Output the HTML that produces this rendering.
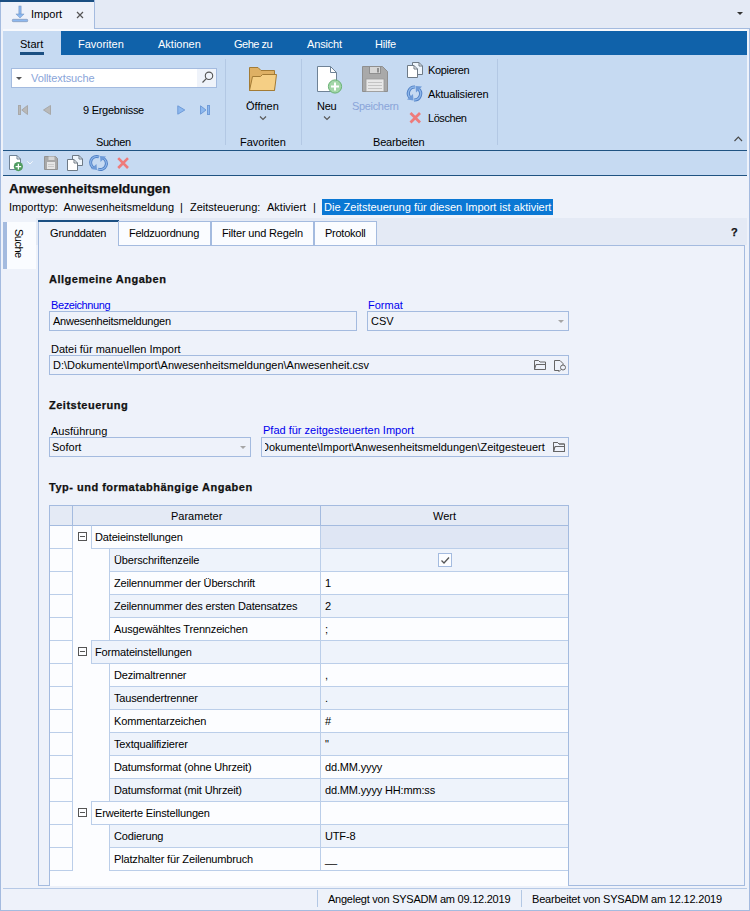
<!DOCTYPE html>
<html><head><meta charset="utf-8">
<style>
*{margin:0;padding:0;box-sizing:border-box}
html,body{width:750px;height:911px;overflow:hidden;background:#eef2fa}
body{position:relative;font-family:"Liberation Sans",sans-serif;font-size:11px;color:#1e1e1e}
.a{position:absolute}
.t{position:absolute;white-space:pre;line-height:11px;font-size:11px}
.b{font-weight:bold;letter-spacing:0.5px;-webkit-text-stroke:0.25px currentColor}
.box{position:absolute;border:1px solid #a4bbdf}
.hl{position:absolute;background:#a4bbdf}
svg{position:absolute;overflow:visible}
</style></head><body>

<!-- frame -->
<div class="a" style="left:0;top:0;width:750px;height:911px;border:1px solid #a4bbdf;border-top:none"></div>

<!-- doc tab strip -->
<div class="a" style="left:94px;top:0;width:656px;height:29px;background:#e4eaf5;border-left:1px solid #a4bbdf;border-bottom:1px solid #a4bbdf"></div>
<div class="a" style="left:0;top:0;width:94px;height:2px;background:#1b4f82"></div>
<svg style="left:0;top:0" width="40" height="30">
 <rect x="18.9" y="6" width="2.2" height="8.5" fill="#8cb8f0" stroke="#6f90bd" stroke-width="0.5"/>
 <path d="M15.9 14 L24.1 14 L20 18 Z" fill="#8cb8f0" stroke="#6f90bd" stroke-width="0.5"/>
 <rect x="12.3" y="19.3" width="15.4" height="2.4" rx="0.8" fill="#8cb8f0" stroke="#7a8fae" stroke-width="0.6"/>
</svg>
<div class="t" style="left:31px;top:9px;color:#000">Import</div>
<svg style="left:0;top:0" width="100" height="30">
 <path d="M77 12 L83 18 M83 12 L77 18" stroke="#555" stroke-width="1.2"/>
</svg>
<svg style="left:0;top:0" width="750" height="30">
 <path d="M737 12 L743 12 L740 15 Z" fill="#333"/>
</svg>

<!-- ribbon -->
<div class="a" style="left:3px;top:29px;width:744px;height:2px;background:#f7f9fd"></div>
<div class="a" style="left:61px;top:31px;width:686px;height:24px;background:#1062aa"></div>
<div class="a" style="left:3px;top:31px;width:58px;height:119px;background:#c6daf2"></div>
<div class="a" style="left:61px;top:55px;width:686px;height:95px;background:#c6daf2"></div>
<div class="t" style="left:20px;top:39px;color:#000">Start</div>
<div class="a" style="left:20px;top:52px;width:24px;height:3px;background:#1b4f82"></div>
<div class="t" style="left:78px;top:39px;color:#fff">Favoriten</div>
<div class="t" style="left:158px;top:39px;color:#fff">Aktionen</div>
<div class="t" style="left:234px;top:39px;color:#fff;letter-spacing:-0.5px">Gehe zu</div>
<div class="t" style="left:307px;top:39px;color:#fff;letter-spacing:-0.16px">Ansicht</div>
<div class="t" style="left:375px;top:39px;color:#fff;letter-spacing:-0.2px">Hilfe</div>

<!-- search box -->
<div class="a" style="left:11px;top:68px;width:206px;height:20px;background:#fff;border:1px solid #a4bbdf"></div>
<div class="a" style="left:197px;top:69px;width:19px;height:18px;background:#eff3fa"></div>
<svg style="left:0;top:0" width="230" height="100">
 <path d="M16 77 L22 77 L19 80 Z" fill="#555"/>
 <circle cx="209" cy="75.8" r="3.7" fill="none" stroke="#555" stroke-width="1.1"/>
 <path d="M206.3 78.6 L202.5 82.5" stroke="#555" stroke-width="1.2"/>
</svg>
<div class="t" style="left:31px;top:73px;color:#8aa5d9;letter-spacing:-0.1px">Volltextsuche</div>

<!-- nav -->
<svg style="left:0;top:0" width="230" height="130">
 <rect x="18.5" y="105.5" width="2" height="9" fill="#b9b9b9" stroke="#a8a8a8" stroke-width="1"/>
 <path d="M27.5 105.5 L27.5 114.5 L21.8 110 Z" fill="#b9b9b9" stroke="#a8a8a8" stroke-width="1" stroke-linejoin="round"/>
 <path d="M50.5 105.5 L50.5 114.5 L43.5 110 Z" fill="#b9b9b9" stroke="#a8a8a8" stroke-width="1" stroke-linejoin="round"/>
 <path d="M177.8 105.8 L177.8 114.2 L184.8 110 Z" fill="#8db8ef" stroke="#6f9bd8" stroke-width="1" stroke-linejoin="round"/>
 <path d="M200.5 105.8 L200.5 114.2 L206 110 Z" fill="#8db8ef" stroke="#6f9bd8" stroke-width="1" stroke-linejoin="round"/>
 <rect x="207.5" y="105.5" width="2" height="9" fill="#8db8ef" stroke="#6f9bd8" stroke-width="1"/>
</svg>
<div class="t" style="left:83px;top:105px;color:#000;letter-spacing:-0.27px">9 Ergebnisse</div>
<div class="t" style="left:96px;top:137px;color:#000;letter-spacing:-0.45px">Suchen</div>

<!-- separators -->
<div class="a" style="left:225px;top:59px;width:1px;height:86px;background:#b3c8e4"></div>
<div class="a" style="left:301px;top:59px;width:1px;height:86px;background:#b3c8e4"></div>
<div class="a" style="left:497px;top:59px;width:1px;height:86px;background:#b3c8e4"></div>

<!-- Favoriten group -->
<svg style="left:0;top:0" width="300" height="130">
 <path d="M249.5 90.5 L249.5 67.5 L258 67.5 L261 70.5 L274.5 70.5 L274.5 90.5 Z" fill="#deb064" stroke="#a37b35" stroke-width="1"/>
 <path d="M249.5 90.5 L252.5 76.5 L260.5 76.5 L262.5 74.5 L276.5 74.5 L274.5 90.5 Z" fill="#f5cf85" stroke="#a37b35" stroke-width="1" stroke-linejoin="round"/>
 <path d="M260 116.5 L263 119.5 L266 116.5" fill="none" stroke="#555" stroke-width="1.1"/>
</svg>
<div class="t" style="left:246px;top:101px;color:#000">Öffnen</div>
<div class="t" style="left:240px;top:137px;color:#000">Favoriten</div>

<!-- Bearbeiten group -->
<svg style="left:0;top:0" width="500" height="130">
 <!-- new doc -->
 <path d="M317.5 66.5 L330.5 66.5 L336.5 72.5 L336.5 91.5 L317.5 91.5 Z" fill="#fff" stroke="#6f8296" stroke-width="1"/>
 <path d="M330.5 66.5 L330.5 72.5 L336.5 72.5" fill="none" stroke="#6f8296" stroke-width="1"/>
 <circle cx="335" cy="86.5" r="6.6" fill="#a3d6a8" stroke="#68b274" stroke-width="1"/>
 <path d="M335 82.5 L335 90.5 M331 86.5 L339 86.5" stroke="#fff" stroke-width="2"/>
 <path d="M324 116.5 L327 119.5 L330 116.5" fill="none" stroke="#555" stroke-width="1.1"/>
 <!-- save gray -->
 <path d="M362.5 66.5 L382.5 66.5 L387.5 71.5 L387.5 91.5 L362.5 91.5 Z" fill="#a9a9a9" stroke="#8f8f8f" stroke-width="1"/>
 <rect x="369.5" y="66.5" width="11" height="7" fill="#d6d6d6" stroke="#8f8f8f" stroke-width="1"/>
 <rect x="377" y="68" width="2" height="4.5" fill="#8f8f8f"/>
 <rect x="366" y="79" width="18" height="12.5" fill="#e8e8e8" stroke="#9a9a9a" stroke-width="0.8"/>
 <path d="M368 82.5 H382 M368 85.5 H382 M368 88.5 H382" stroke="#c4c4c4" stroke-width="1"/>
 <!-- copy -->
 <path d="M412.5 62.5 L419 62.5 L422.5 66 L422.5 74.5 L412.5 74.5 Z" fill="#eef5fc" stroke="#6e7a86" stroke-width="1"/>
 <path d="M419 62.5 L419 66 L422.5 66" fill="none" stroke="#6e7a86" stroke-width="1"/>
 <path d="M407.5 65.5 L414 65.5 L417.5 69 L417.5 77.5 L407.5 77.5 Z" fill="#fff" stroke="#6e7a86" stroke-width="1"/>
 <path d="M414 65.5 L414 69 L417.5 69" fill="none" stroke="#6e7a86" stroke-width="1"/>
 <!-- refresh -->
 <path d="M415 87 A6.3 6.3 0 0 0 410.5 98" fill="none" stroke="#4f7fc4" stroke-width="3.2"/>
 <path d="M414 100 A6.3 6.3 0 0 0 418.5 89" fill="none" stroke="#4f7fc4" stroke-width="3.2"/>
 <path d="M415 87 A6.3 6.3 0 0 0 410.5 98" fill="none" stroke="#8db6ea" stroke-width="1.4"/>
 <path d="M414 100 A6.3 6.3 0 0 0 418.5 89" fill="none" stroke="#8db6ea" stroke-width="1.4"/>
 <path d="M407 99.5 L413.5 100.5 L413 94 Z" fill="#6f9bd8"/>
 <path d="M422 86.5 L415.5 86 L416 92.5 Z" fill="#6f9bd8"/>
 <!-- delete -->
 <path d="M410.5 113 L420 122.5 M420 113 L410.5 122.5" stroke="#ee7b7b" stroke-width="2.8"/>
</svg>
<div class="t" style="left:317px;top:101px;color:#000;letter-spacing:-0.3px">Neu</div>
<div class="t" style="left:352px;top:101px;color:#8aa5d9;letter-spacing:-0.33px">Speichern</div>
<div class="t" style="left:428px;top:65px;color:#000;letter-spacing:-0.33px">Kopieren</div>
<div class="t" style="left:428px;top:89px;color:#000;letter-spacing:-0.2px">Aktualisieren</div>
<div class="t" style="left:428px;top:113px;color:#000;letter-spacing:-0.44px">Löschen</div>
<div class="t" style="left:373px;top:137px;color:#000;letter-spacing:-0.17px">Bearbeiten</div>
<svg style="left:0;top:0" width="750" height="150">
 <path d="M734.5 141 L738.3 137.2 L742 141" fill="none" stroke="#4a4a4a" stroke-width="1.2"/>
</svg>

<!-- toolbar -->
<div class="a" style="left:3px;top:150px;width:744px;height:1px;background:#1f5382"></div>
<div class="a" style="left:3px;top:151px;width:744px;height:24px;background:#c6daf2"></div>
<div class="a" style="left:3px;top:175px;width:744px;height:1px;background:#1f5382"></div>
<svg style="left:0;top:0" width="150" height="180">
 <path d="M9.5 155.5 L17 155.5 L20.5 159 L20.5 169.5 L9.5 169.5 Z" fill="#fff" stroke="#6f8296" stroke-width="1"/>
 <path d="M17 155.5 L17 159 L20.5 159" fill="none" stroke="#6f8296" stroke-width="1"/>
 <circle cx="18.4" cy="166.6" r="4.6" fill="#4f9c60"/>
 <path d="M18.4 163.8 L18.4 169.4 M15.6 166.6 L21.2 166.6" stroke="#fff" stroke-width="1.3"/>
 <path d="M27.3 161.3 L30 164 L32.7 161.3" fill="none" stroke="#f4f8fd" stroke-width="1"/>
 <path d="M44.5 156.5 L55.5 156.5 L57.5 158.5 L57.5 169.5 L44.5 169.5 Z" fill="#a9a9a9" stroke="#939393" stroke-width="1"/>
 <rect x="48.5" y="156.5" width="6" height="3.5" fill="#d6d6d6"/>
 <rect x="47" y="162" width="8" height="7" fill="#e6e6e6"/>
 <path d="M48 164.5 H54 M48 166.5 H54" stroke="#c4c4c4" stroke-width="0.8"/>
 <path d="M72.5 155.5 L79 155.5 L82.5 159 L82.5 165.5 L72.5 165.5 Z" fill="#eef5fc" stroke="#6e7a86" stroke-width="1"/>
 <path d="M79 155.5 L79 159 L82.5 159" fill="none" stroke="#6e7a86" stroke-width="1"/>
 <path d="M67.5 159.5 L74 159.5 L77.5 163 L77.5 170.5 L67.5 170.5 Z" fill="#fff" stroke="#6e7a86" stroke-width="1"/>
 <path d="M74 159.5 L74 163 L77.5 163" fill="none" stroke="#6e7a86" stroke-width="1"/>
 <path d="M99 157 A6 6 0 0 0 94.2 168" fill="none" stroke="#4f7fc4" stroke-width="3"/>
 <path d="M98 169 A6 6 0 0 0 102.8 158" fill="none" stroke="#4f7fc4" stroke-width="3"/>
 <path d="M99 157 A6 6 0 0 0 94.2 168" fill="none" stroke="#8db6ea" stroke-width="1.2"/>
 <path d="M98 169 A6 6 0 0 0 102.8 158" fill="none" stroke="#8db6ea" stroke-width="1.2"/>
 <path d="M91 169 L97 170 L96.5 164 Z" fill="#6f9bd8"/>
 <path d="M106 156.5 L100 156 L100.5 162 Z" fill="#6f9bd8"/>
 <path d="M118.2 158.2 L128 168 M128 158.2 L118.2 168" stroke="#ee7b7b" stroke-width="2.6"/>
</svg>

<!-- title -->
<div class="t b" style="left:9px;top:182px;font-size:13.4px;letter-spacing:0;line-height:13px;color:#111">Anwesenheitsmeldungen</div>
<div class="t" style="left:9px;top:202px;color:#000">Importtyp:  Anwesenheitsmeldung</div>
<div class="t" style="left:180px;top:202px;color:#000">|</div>
<div class="t" style="left:190px;top:202px;color:#000">Zeitsteuerung:</div>
<div class="t" style="left:267px;top:202px;color:#000">Aktiviert</div>
<div class="t" style="left:313px;top:202px;color:#000">|</div>
<div class="a" style="left:322px;top:199px;width:231px;height:16px;background:#0a78d4"></div>
<div class="t" style="left:324px;top:202px;color:#fff">Die Zeitsteuerung für diesen Import ist aktiviert</div>

<!-- side panel -->
<div class="a" style="left:3px;top:222px;width:33px;height:47px;background:#fafcff"></div>
<div class="a" style="left:3px;top:222px;width:4px;height:47px;background:#a4bbdf"></div>
<div class="t" style="left:24px;top:229px;transform:rotate(90deg);transform-origin:0 0;color:#000;letter-spacing:-0.5px">Suche</div>

<!-- tab header strip -->
<div class="a" style="left:36px;top:218px;width:711px;height:27px;background:#e4eaf5"></div>
<div class="a" style="left:38px;top:220px;width:81px;height:26px;background:#eef2fa;border-left:1px solid #a4bbdf"></div>
<div class="a" style="left:38px;top:220px;width:81px;height:2px;background:#1b4f82"></div>
<div class="a" style="left:118px;top:221px;width:93px;height:25px;background:#fafcff;border:1px solid #a4bbdf;border-bottom:none"></div>
<div class="a" style="left:211px;top:221px;width:103px;height:25px;background:#fafcff;border:1px solid #a4bbdf;border-bottom:none"></div>
<div class="a" style="left:314px;top:221px;width:63px;height:25px;background:#fafcff;border:1px solid #a4bbdf;border-bottom:none"></div>
<div class="t" style="left:50px;top:228px;color:#000;letter-spacing:-0.18px">Grunddaten</div>
<div class="t" style="left:129px;top:228px;color:#000;letter-spacing:-0.26px">Feldzuordnung</div>
<div class="t" style="left:222px;top:228px;color:#000;letter-spacing:-0.17px">Filter und Regeln</div>
<div class="t" style="left:325px;top:228px;color:#000;letter-spacing:-0.25px">Protokoll</div>
<div class="t b" style="left:731px;top:227px;color:#111">?</div>

<!-- tab page -->
<div class="a" style="left:38px;top:245px;width:707px;height:641px;border:1px solid #a4bbdf;border-top:none;background:#eef2fa"></div>
<div class="a" style="left:118px;top:245px;width:627px;height:1px;background:#a4bbdf"></div>

<!--FORM-->
<div class="t b" style="left:49px;top:274px;color:#111">Allgemeine Angaben</div>
<div class="t" style="left:51px;top:300px;color:#0000ee;letter-spacing:-0.4px">Bezeichnung</div>
<div class="box" style="left:49px;top:311px;width:308px;height:20px"></div>
<div class="t" style="left:53px;top:316px;color:#000;letter-spacing:-0.24px">Anwesenheitsmeldungen</div>
<div class="t" style="left:368px;top:300px;color:#0000ee">Format</div>
<div class="box" style="left:367px;top:311px;width:202px;height:20px"></div>
<div class="t" style="left:371px;top:316px;color:#000">CSV</div>
<svg style="left:0;top:0" width="600" height="480">
 <path d="M558 320 L564 320 L561 323 Z" fill="#a6a6a6"/>
 <path d="M240 446 L246 446 L243 449 Z" fill="#a6a6a6"/>
</svg>
<div class="t" style="left:51px;top:344px;color:#000">Datei für manuellen Import</div>
<div class="box" style="left:49px;top:355px;width:520px;height:20px"></div>
<div class="t" style="left:53px;top:360px;color:#000">D:\Dokumente\Import\Anwesenheitsmeldungen\Anwesenheit.csv</div>
<svg style="left:0;top:0" width="600" height="480">
 <path d="M534.5 369.5 L534.5 360.5 L538.5 360.5 L540 362 L545.5 362 L545.5 369.5 Z" fill="none" stroke="#666" stroke-width="1"/>
 <path d="M534.5 369.5 L536 364.5 L545.5 364.5" fill="none" stroke="#666" stroke-width="1"/>
 <path d="M559 370.5 L554.5 370.5 L554.5 360.5 L560 360.5 L563 363.5 L563 365" fill="none" stroke="#666" stroke-width="1"/>
 <circle cx="563" cy="367.5" r="2.5" fill="none" stroke="#666" stroke-width="1"/>
 <path d="M561 369.5 L558.5 372" stroke="#666" stroke-width="1"/>
 <path d="M553.5 451.5 L553.5 442.5 L557.5 442.5 L559 444 L564.5 444 L564.5 451.5 Z" fill="none" stroke="#666" stroke-width="1"/>
 <path d="M553.5 451.5 L555 446.5 L564.5 446.5" fill="none" stroke="#666" stroke-width="1"/>
</svg>
<div class="t b" style="left:49px;top:400px;color:#111">Zeitsteuerung</div>
<div class="t" style="left:51px;top:426px;color:#000">Ausführung</div>
<div class="box" style="left:49px;top:437px;width:202px;height:20px"></div>
<div class="t" style="left:52px;top:442px;color:#000">Sofort</div>
<div class="t" style="left:263px;top:425px;color:#0000ee">Pfad für zeitgesteuerten Import</div>
<div class="box" style="left:261px;top:437px;width:308px;height:20px"><div class="a" style="left:3px;top:0;width:284px;height:18px;overflow:hidden"><div class="t" style="left:-4px;top:4px;color:#000">Dokumente\Import\Anwesenheitsmeldungen\Zeitgesteuert</div></div></div>
<svg style="left:0;top:0" width="600" height="480">
 <path d="M553.5 451.5 L553.5 442.5 L557.5 442.5 L559 444 L564.5 444 L564.5 451.5 Z" fill="none" stroke="#666" stroke-width="1"/>
 <path d="M553.5 451.5 L555 446.5 L564.5 446.5" fill="none" stroke="#666" stroke-width="1"/>
</svg>
<div class="t b" style="left:49px;top:482px;color:#111">Typ- und formatabhängige Angaben</div>
<!--/FORM-->
<!--GRID-->
<div class="a" style="left:49px;top:505px;width:520px;height:381px;overflow:hidden;background:#fcfdff;border-left:1px solid #a4bbdf;border-right:1px solid #a4bbdf">
<div class="a" style="left:0;top:0;width:518px;height:21px;background:#e4eaf5;border-top:1px solid #a4bbdf;border-bottom:1px solid #a4bbdf"></div>
<div class="a" style="left:22px;top:0;width:1px;height:21px;background:#a4bbdf"></div>
<div class="a" style="left:270px;top:0;width:1px;height:21px;background:#a4bbdf"></div>
<div class="t" style="left:121px;top:6px;color:#000">Parameter</div>
<div class="t" style="left:383px;top:6px;color:#000">Wert</div>
<div class="a" style="left:0;top:21px;width:22px;height:345px;background:#fcfdff"></div>
<div class="a" style="left:22px;top:21px;width:1px;height:345px;background:#bbcee9"></div>
<div class="a" style="left:0;top:43px;width:22px;height:1px;background:#bbcee9"></div>
<div class="a" style="left:23px;top:21px;width:18px;height:22px;background:#fcfdff"></div>
<div class="a" style="left:41px;top:20px;width:229px;height:24px;background:#fcfdff;border-left:1px solid #bbcee9;border-top:1px solid #a4bbdf;border-bottom:1px solid #bbcee9"></div>
<div class="a" style="left:271px;top:21px;width:247px;height:22px;background:#dfe6f4"></div>
<div class="a" style="left:271px;top:43px;width:247px;height:1px;background:#bbcee9"></div>
<div class="a" style="left:28px;top:27px;width:9px;height:9px;border:1px solid #555;background:#fcfdff"></div>
<div class="a" style="left:30px;top:31px;width:5px;height:1px;background:#555"></div>
<div class="t" style="left:45px;top:27px;color:#000;letter-spacing:-0.16px">Dateieinstellungen</div>
<div class="a" style="left:270px;top:21px;width:1px;height:23px;background:#bbcee9"></div>
<div class="a" style="left:0;top:66px;width:22px;height:1px;background:#bbcee9"></div>
<div class="a" style="left:23px;top:44px;width:36px;height:22px;background:#fcfdff"></div>
<div class="a" style="left:59px;top:44px;width:459px;height:22px;background:#eef3fb;border-left:1px solid #bbcee9"></div>
<div class="a" style="left:59px;top:66px;width:459px;height:1px;background:#bbcee9"></div>
<div class="t" style="left:64px;top:50px;color:#000;letter-spacing:-0.16px">Überschriftenzeile</div>
<div class="a" style="left:388px;top:48px;width:14px;height:14px;border:1px solid #a4bbdf;background:#fcfdff"></div>
<svg style="left:388px;top:48px" width="14" height="14"><path d="M3.5 7.5 L6 10 L11 4.5" fill="none" stroke="#555" stroke-width="1.3"/></svg>
<div class="a" style="left:270px;top:44px;width:1px;height:23px;background:#bbcee9"></div>
<div class="a" style="left:0;top:89px;width:22px;height:1px;background:#bbcee9"></div>
<div class="a" style="left:23px;top:67px;width:36px;height:22px;background:#fcfdff"></div>
<div class="a" style="left:59px;top:67px;width:459px;height:22px;background:#fcfdff;border-left:1px solid #bbcee9"></div>
<div class="a" style="left:59px;top:89px;width:459px;height:1px;background:#bbcee9"></div>
<div class="t" style="left:64px;top:73px;color:#000;letter-spacing:-0.16px">Zeilennummer der Überschrift</div>
<div class="t" style="left:275px;top:73px;color:#000;letter-spacing:-0.16px">1</div>
<div class="a" style="left:270px;top:67px;width:1px;height:23px;background:#bbcee9"></div>
<div class="a" style="left:0;top:112px;width:22px;height:1px;background:#bbcee9"></div>
<div class="a" style="left:23px;top:90px;width:36px;height:22px;background:#fcfdff"></div>
<div class="a" style="left:59px;top:90px;width:459px;height:22px;background:#eef3fb;border-left:1px solid #bbcee9"></div>
<div class="a" style="left:59px;top:112px;width:459px;height:1px;background:#bbcee9"></div>
<div class="t" style="left:64px;top:96px;color:#000;letter-spacing:-0.16px">Zeilennummer des ersten Datensatzes</div>
<div class="t" style="left:275px;top:96px;color:#000;letter-spacing:-0.16px">2</div>
<div class="a" style="left:270px;top:90px;width:1px;height:23px;background:#bbcee9"></div>
<div class="a" style="left:0;top:135px;width:22px;height:1px;background:#bbcee9"></div>
<div class="a" style="left:23px;top:113px;width:36px;height:22px;background:#fcfdff"></div>
<div class="a" style="left:59px;top:113px;width:459px;height:22px;background:#fcfdff;border-left:1px solid #bbcee9"></div>
<div class="a" style="left:59px;top:135px;width:459px;height:1px;background:#bbcee9"></div>
<div class="t" style="left:64px;top:119px;color:#000;letter-spacing:-0.16px">Ausgewähltes Trennzeichen</div>
<div class="t" style="left:275px;top:119px;color:#000;letter-spacing:-0.16px">;</div>
<div class="a" style="left:270px;top:113px;width:1px;height:23px;background:#bbcee9"></div>
<div class="a" style="left:0;top:158px;width:22px;height:1px;background:#bbcee9"></div>
<div class="a" style="left:23px;top:136px;width:18px;height:22px;background:#fcfdff"></div>
<div class="a" style="left:41px;top:135px;width:229px;height:24px;background:#eef3fb;border-left:1px solid #bbcee9;border-top:1px solid #bbcee9;border-bottom:1px solid #bbcee9"></div>
<div class="a" style="left:271px;top:136px;width:247px;height:22px;background:#eef3fb"></div>
<div class="a" style="left:271px;top:158px;width:247px;height:1px;background:#bbcee9"></div>
<div class="a" style="left:28px;top:142px;width:9px;height:9px;border:1px solid #555;background:#fcfdff"></div>
<div class="a" style="left:30px;top:146px;width:5px;height:1px;background:#555"></div>
<div class="t" style="left:45px;top:142px;color:#000;letter-spacing:-0.16px">Formateinstellungen</div>
<div class="a" style="left:270px;top:136px;width:1px;height:23px;background:#bbcee9"></div>
<div class="a" style="left:0;top:181px;width:22px;height:1px;background:#bbcee9"></div>
<div class="a" style="left:23px;top:159px;width:36px;height:22px;background:#fcfdff"></div>
<div class="a" style="left:59px;top:159px;width:459px;height:22px;background:#fcfdff;border-left:1px solid #bbcee9"></div>
<div class="a" style="left:59px;top:181px;width:459px;height:1px;background:#bbcee9"></div>
<div class="t" style="left:64px;top:165px;color:#000;letter-spacing:-0.16px">Dezimaltrenner</div>
<div class="t" style="left:275px;top:165px;color:#000;letter-spacing:-0.16px">,</div>
<div class="a" style="left:270px;top:159px;width:1px;height:23px;background:#bbcee9"></div>
<div class="a" style="left:0;top:204px;width:22px;height:1px;background:#bbcee9"></div>
<div class="a" style="left:23px;top:182px;width:36px;height:22px;background:#fcfdff"></div>
<div class="a" style="left:59px;top:182px;width:459px;height:22px;background:#eef3fb;border-left:1px solid #bbcee9"></div>
<div class="a" style="left:59px;top:204px;width:459px;height:1px;background:#bbcee9"></div>
<div class="t" style="left:64px;top:188px;color:#000;letter-spacing:-0.16px">Tausendertrenner</div>
<div class="t" style="left:275px;top:188px;color:#000;letter-spacing:-0.16px">.</div>
<div class="a" style="left:270px;top:182px;width:1px;height:23px;background:#bbcee9"></div>
<div class="a" style="left:0;top:227px;width:22px;height:1px;background:#bbcee9"></div>
<div class="a" style="left:23px;top:205px;width:36px;height:22px;background:#fcfdff"></div>
<div class="a" style="left:59px;top:205px;width:459px;height:22px;background:#fcfdff;border-left:1px solid #bbcee9"></div>
<div class="a" style="left:59px;top:227px;width:459px;height:1px;background:#bbcee9"></div>
<div class="t" style="left:64px;top:211px;color:#000;letter-spacing:-0.16px">Kommentarzeichen</div>
<div class="t" style="left:275px;top:211px;color:#000;letter-spacing:-0.16px">#</div>
<div class="a" style="left:270px;top:205px;width:1px;height:23px;background:#bbcee9"></div>
<div class="a" style="left:0;top:250px;width:22px;height:1px;background:#bbcee9"></div>
<div class="a" style="left:23px;top:228px;width:36px;height:22px;background:#fcfdff"></div>
<div class="a" style="left:59px;top:228px;width:459px;height:22px;background:#eef3fb;border-left:1px solid #bbcee9"></div>
<div class="a" style="left:59px;top:250px;width:459px;height:1px;background:#bbcee9"></div>
<div class="t" style="left:64px;top:234px;color:#000;letter-spacing:-0.16px">Textqualifizierer</div>
<div class="t" style="left:275px;top:234px;color:#000;letter-spacing:-0.16px">"</div>
<div class="a" style="left:270px;top:228px;width:1px;height:23px;background:#bbcee9"></div>
<div class="a" style="left:0;top:273px;width:22px;height:1px;background:#bbcee9"></div>
<div class="a" style="left:23px;top:251px;width:36px;height:22px;background:#fcfdff"></div>
<div class="a" style="left:59px;top:251px;width:459px;height:22px;background:#fcfdff;border-left:1px solid #bbcee9"></div>
<div class="a" style="left:59px;top:273px;width:459px;height:1px;background:#bbcee9"></div>
<div class="t" style="left:64px;top:257px;color:#000;letter-spacing:-0.16px">Datumsformat (ohne Uhrzeit)</div>
<div class="t" style="left:275px;top:257px;color:#000;letter-spacing:-0.16px">dd.MM.yyyy</div>
<div class="a" style="left:270px;top:251px;width:1px;height:23px;background:#bbcee9"></div>
<div class="a" style="left:0;top:296px;width:22px;height:1px;background:#bbcee9"></div>
<div class="a" style="left:23px;top:274px;width:36px;height:22px;background:#fcfdff"></div>
<div class="a" style="left:59px;top:274px;width:459px;height:22px;background:#eef3fb;border-left:1px solid #bbcee9"></div>
<div class="a" style="left:59px;top:296px;width:459px;height:1px;background:#bbcee9"></div>
<div class="t" style="left:64px;top:280px;color:#000;letter-spacing:-0.16px">Datumsformat (mit Uhrzeit)</div>
<div class="t" style="left:275px;top:280px;color:#000;letter-spacing:-0.16px">dd.MM.yyyy HH:mm:ss</div>
<div class="a" style="left:270px;top:274px;width:1px;height:23px;background:#bbcee9"></div>
<div class="a" style="left:0;top:319px;width:22px;height:1px;background:#bbcee9"></div>
<div class="a" style="left:23px;top:297px;width:18px;height:22px;background:#fcfdff"></div>
<div class="a" style="left:41px;top:296px;width:229px;height:24px;background:#fcfdff;border-left:1px solid #bbcee9;border-top:1px solid #bbcee9;border-bottom:1px solid #bbcee9"></div>
<div class="a" style="left:271px;top:297px;width:247px;height:22px;background:#fcfdff"></div>
<div class="a" style="left:271px;top:319px;width:247px;height:1px;background:#bbcee9"></div>
<div class="a" style="left:28px;top:303px;width:9px;height:9px;border:1px solid #555;background:#fcfdff"></div>
<div class="a" style="left:30px;top:307px;width:5px;height:1px;background:#555"></div>
<div class="t" style="left:45px;top:303px;color:#000;letter-spacing:-0.16px">Erweiterte Einstellungen</div>
<div class="a" style="left:270px;top:297px;width:1px;height:23px;background:#bbcee9"></div>
<div class="a" style="left:0;top:342px;width:22px;height:1px;background:#bbcee9"></div>
<div class="a" style="left:23px;top:320px;width:36px;height:22px;background:#fcfdff"></div>
<div class="a" style="left:59px;top:320px;width:459px;height:22px;background:#eef3fb;border-left:1px solid #bbcee9"></div>
<div class="a" style="left:59px;top:342px;width:459px;height:1px;background:#bbcee9"></div>
<div class="t" style="left:64px;top:326px;color:#000;letter-spacing:-0.16px">Codierung</div>
<div class="t" style="left:275px;top:326px;color:#000;letter-spacing:-0.16px">UTF-8</div>
<div class="a" style="left:270px;top:320px;width:1px;height:23px;background:#bbcee9"></div>
<div class="a" style="left:0;top:365px;width:22px;height:1px;background:#bbcee9"></div>
<div class="a" style="left:23px;top:343px;width:36px;height:22px;background:#fcfdff"></div>
<div class="a" style="left:59px;top:343px;width:459px;height:22px;background:#fcfdff;border-left:1px solid #bbcee9"></div>
<div class="a" style="left:59px;top:365px;width:459px;height:1px;background:#bbcee9"></div>
<div class="t" style="left:64px;top:349px;color:#000;letter-spacing:-0.16px">Platzhalter für Zeilenumbruch</div>
<div class="t" style="left:275px;top:349px;color:#000;letter-spacing:-0.16px">__</div>
<div class="a" style="left:270px;top:343px;width:1px;height:23px;background:#bbcee9"></div>
</div>
<!--/GRID-->

<!-- status bar -->
<div class="a" style="left:3px;top:888px;width:744px;height:1px;background:#b6c9e6"></div>
<div class="a" style="left:317px;top:890px;width:1px;height:17px;background:#b3c8e4"></div>
<div class="a" style="left:521px;top:890px;width:1px;height:17px;background:#b3c8e4"></div>
<div class="t" style="left:328px;top:894px;color:#000;letter-spacing:-0.24px">Angelegt von SYSADM am 09.12.2019</div>
<div class="t" style="left:532px;top:894px;color:#000;letter-spacing:-0.2px">Bearbeitet von SYSADM am 12.12.2019</div>

</body></html>
